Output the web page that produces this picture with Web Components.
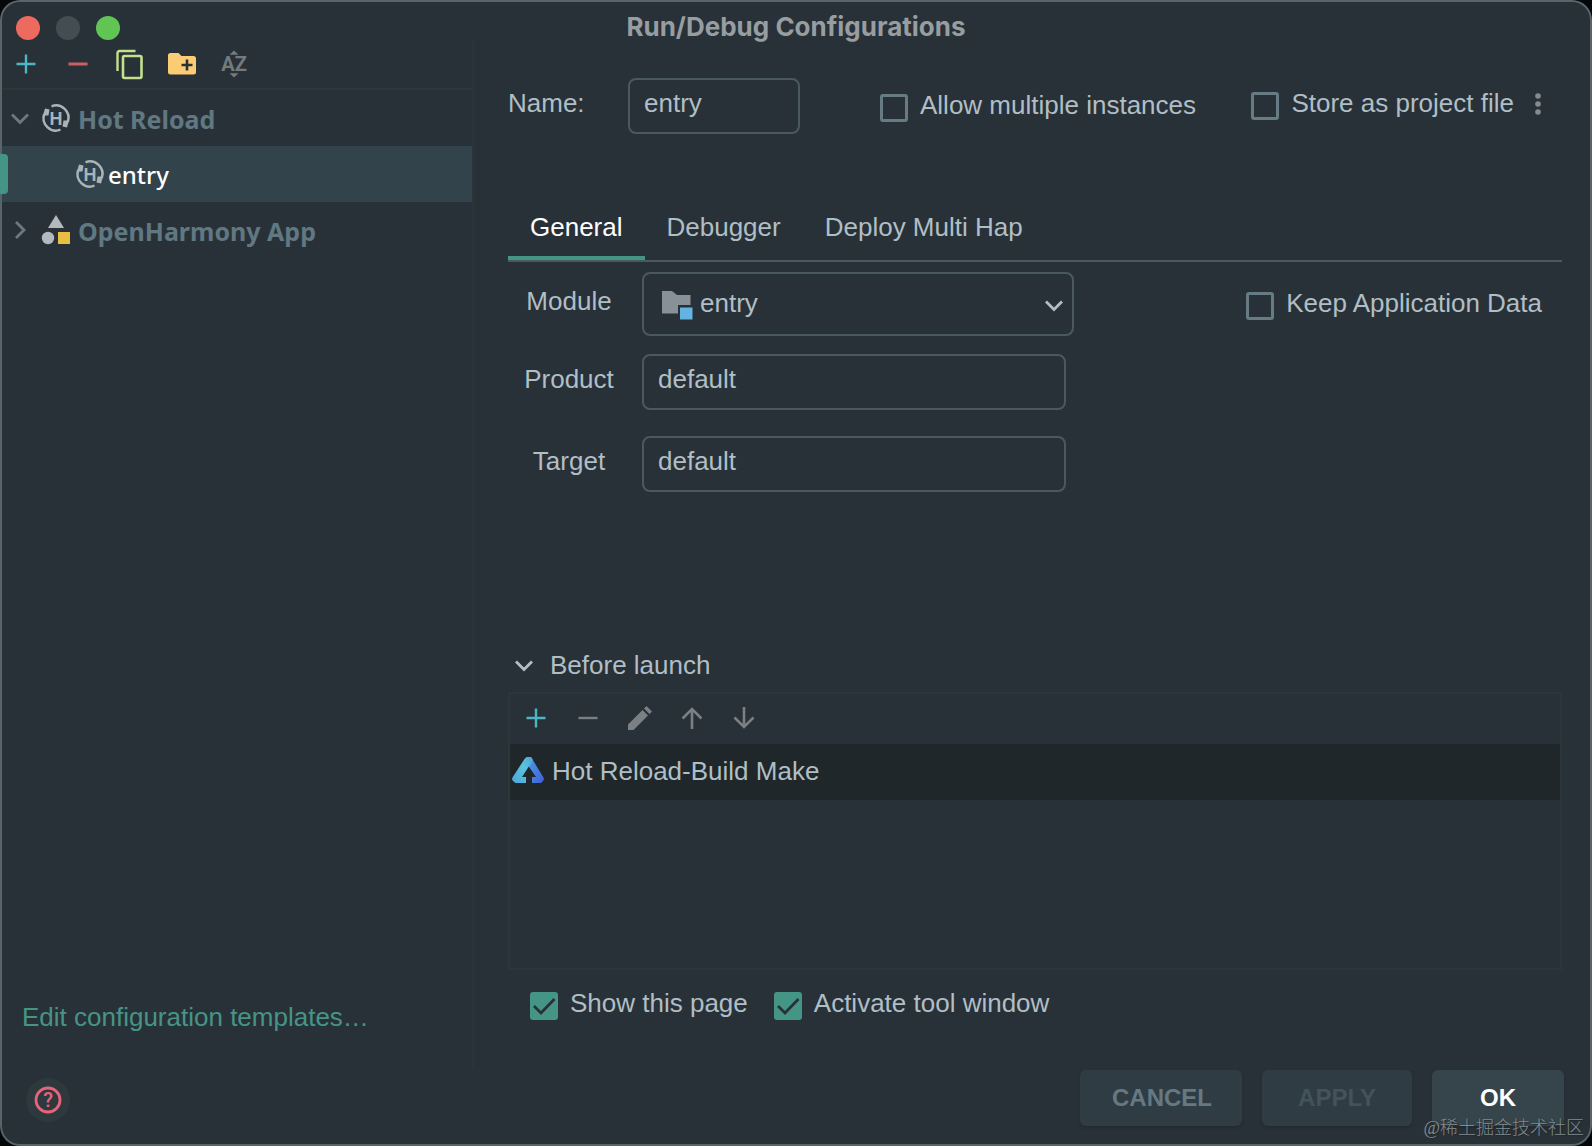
<!DOCTYPE html>
<html lang="en">
<head>
<meta charset="utf-8">
<title>Run/Debug Configurations</title>
<style>
  html { background: #05080a; }
  body { margin: 0; font: 26px/30px "Liberation Sans", "Noto Sans CJK SC", sans-serif; color: #b0bec5; }
</style>
</head>
<body>
<run-dialog></run-dialog>
<script>
function define(name, html, setup) {
  const template = document.createElement('template');
  template.innerHTML = '<style>*{box-sizing:border-box}:host{display:block;box-sizing:border-box}button,input,select{font:inherit;color:inherit;margin:0}button{background:none;border:0;padding:0}</style>' + html;
  customElements.define(name, class extends HTMLElement {
    connectedCallback() {
      if (this.shadowRoot) return;
      this.attachShadow({ mode: 'open' }).append(template.content.cloneNode(true));
      if (setup) setup(this, this.shadowRoot);
    }
  });
}

const icons = {
  plus: '<path d="M14 4.500v19M4.500 14h19" stroke="#4db6c4" stroke-width="2.400"/>',
  minus: '<path d="M4.500 14h19" stroke="#c95f63" stroke-width="3"/>',
  minusOff: '<path d="M4.500 14h19" stroke="#7b8183" stroke-width="2.400"/>',
  copy: '<path d="M1.500 21V3a2 2 0 0 1 2-2H19.500" stroke="#c3e08d" stroke-width="2.400"/><rect x="7" y="6" width="18.500" height="22" rx="1.500" stroke="#c3e08d" stroke-width="2.600"/>',
  folder: '<path d="M2.500 3h8l3 3h12a2.500 2.500 0 0 1 2.500 2.500v13.500a2.500 2.500 0 0 1-2.500 2.500h-23A2.500 2.500 0 0 1 0 22V5.500A2.500 2.500 0 0 1 2.500 3z" fill="#fccc75"/><path d="M19 9.500v11M13.500 15h11" stroke="#293138" stroke-width="2.600"/>',
  sort: '<path d="M14 .5l4.500 4.300h-9zM14 27.500l4.500-4.300h-9z" fill="#737b7f"/><text x="14" y="21" text-anchor="middle" font-family="Roboto, sans-serif" font-weight="700" font-size="20" fill="#737b7f">AZ</text>',
  down: '<path d="M6 10.500l8 8 8-8" stroke="currentColor" stroke-width="2.800"/>',
  right: '<path d="M10 6l8 8-8 8" stroke="currentColor" stroke-width="2.800"/>',
  reload: '<path d="M9.500 2.300A12.500 12.500 0 0 1 25.800 18M18.500 25.700A12.500 12.500 0 0 1 2.200 10" stroke="#a9b3b8" stroke-width="2.500"/><path d="M1 11.500L3 4.500l4.500 1-1 6zM27 16.500l-2 7-4.500-1 1-6z" fill="#a9b3b8"/><text x="14" y="20.500" text-anchor="middle" font-family="Liberation Sans, sans-serif" font-weight="700" font-size="18" fill="#a9b3b8">H</text>',
  app: '<path d="M14-1l8 13H6z" fill="#b3b9bc"/><circle cx="6" cy="22" r="6.200" fill="#b3b9bc"/><path d="M16 16h12v12H16z" fill="#e8bf42"/>',
  pencil: '<path d="M2 26v-5.500L16.500 6l5.500 5.500L7.500 26zM18 4.500L20.500 2l5.500 5.500L23.500 10z" fill="#7b8183"/>',
  up: '<path d="M14 25V5M4.500 14.500L14 5l9.500 9.500" stroke="#7b8183" stroke-width="2.600"/>',
  downArrow: '<path d="M14 3v20M4.500 13.500L14 23l9.500-9.500" stroke="#7b8183" stroke-width="2.600"/>',
  dots: '<g fill="#858c8f"><circle cx="14" cy="4" r="2.800"/><circle cx="14" cy="12" r="2.800"/><circle cx="14" cy="20" r="2.800"/></g>',
  module: '<path d="M0 1h10l5 4h13.500v10H16v8.500H0z" fill="#879197"/><path d="M18 17.500h12.500v12H18z" fill="#65b3e0"/>',
  help: '<circle cx="14" cy="14" r="12" stroke="#e8647c" stroke-width="2.800"/><text x="14" y="21" text-anchor="middle" font-family="Roboto, sans-serif" font-weight="500" font-size="20" fill="#e8647c">?</text>',
  make: '<defs><linearGradient id="a" x1="0" y1="1" x2="1" y2="0"><stop stop-color="#49a6de"/><stop offset=".6" stop-color="#5bc4dc"/><stop offset="1" stop-color="#4aa4dd"/></linearGradient><linearGradient id="b" x1="0" y1="0" x2="1" y2="1"><stop stop-color="#4f9fe6"/><stop offset="1" stop-color="#3f5fd8"/></linearGradient></defs><path d="M17 0l12.500 20.500q1 2-.5 3.500l-2 2H18v-6h4L13 7z" fill="url(#b)"/><path d="M12.500 0H17l2 3L8 20h4v6H1.500l-2.500-2q-1.500-1.500-.5-3.500L10.500 2z" fill="url(#a)"/>'
};

define('ui-icon', '<style>:host{display:block;width:28px;height:28px;flex:none}svg{display:block;width:28px;height:28px;overflow:visible}</style><svg viewBox="0 0 28 28" fill="none" aria-hidden="true"></svg>',
  (host, root) => { root.querySelector('svg').innerHTML = icons[host.getAttribute('name')]; });

define('ui-tool', '<style>:host{width:52px;flex:none}button{display:grid;place-items:center;width:100%;height:48px}</style><button type="button"><slot></slot></button>',
  (host, root) => root.querySelector('button').setAttribute('aria-label', host.getAttribute('label')));

define('ui-check', `<style>
  label{display:flex;align-items:center;gap:12px;white-space:nowrap}
  .box{display:grid;width:28px;height:28px;flex:none}
  input,svg{grid-area:1/1;width:28px;height:28px}
  input{appearance:none;border:3px solid #667b83;border-radius:3px}
  input:checked{background:#459587;border-color:#459587}
  svg{visibility:hidden;pointer-events:none}input:checked+svg{visibility:visible}
  .text{padding-bottom:6px}</style>
  <label><span class="box"><input type="checkbox"><svg viewBox="0 0 28 28" fill="none"><path d="M4 14l7 7L24.500 7" stroke="#293138" stroke-width="2.800"/></svg></span><span class="text"><slot></slot></span></label>`,
  (host, root) => { root.querySelector('input').checked = host.hasAttribute('checked'); });

define('ui-field', `<style>
  :host{display:flex;align-items:center}
  label{width:var(--label,122px);margin-right:12px;padding-bottom:6px;text-align:var(--align,center);flex:none}
  input{width:var(--field,424px);height:56px;min-width:0;background:none;border:2px solid #4a595f;border-radius:8px;padding:0 14px 6px;outline:0}</style>
  <label for="f"></label><input id="f" type="text">`,
  (host, root) => {
    root.querySelector('label').textContent = host.getAttribute('label');
    root.querySelector('input').value = host.getAttribute('value');
  });

define('ui-combo', `<style>
  :host{display:flex;align-items:center}
  label{width:122px;margin-right:12px;padding-bottom:6px;text-align:center;flex:none}
  .box{display:grid;grid-template-columns:56px 1fr 34px;align-items:center;width:432px;height:64px}
  select{grid-area:1/1/2/4;width:100%;height:64px;appearance:none;background:none;border:2px solid #4a595f;border-radius:8px;padding:0 40px 2px 56px;outline:0}
  ui-icon{grid-row:1;pointer-events:none}.m{grid-column:1;margin-left:20px}.c{grid-column:3;margin-top:2px}</style>
  <label for="s">Module</label><div class="box"><select id="s"><option>entry</option></select><ui-icon class="m" name="module"></ui-icon><ui-icon class="c" name="down"></ui-icon></div>`);

define('ui-tab', `<style>
  button{height:68px;padding:6px 22px 0;border-bottom:4px solid transparent;white-space:nowrap}
  :host([selected]) button{color:#fff;border-color:#459587}</style>
  <button type="button" role="tab"><slot></slot></button>`,
  (host, root) => root.querySelector('button').setAttribute('aria-selected', host.hasAttribute('selected')));

define('ui-button', `<style>
  button{width:100%;height:56px;padding:0 32px;border-radius:6px;background:#303c43;color:#657983;font-weight:700;font-size:24px;box-shadow:0 2px 3px #232b30}
  :host([primary]) button{background:#35454b;color:#fff}
  button:disabled{color:#43525b}</style>
  <button type="button"><slot></slot></button>`,
  (host, root) => { root.querySelector('button').disabled = host.hasAttribute('disabled'); });

define('tree-row', `<style>
  :host{position:relative}
  button{display:flex;align-items:center;width:100%;height:56px;padding-left:6px;text-align:left;font:700 25px/30px "Noto Sans",sans-serif;color:#607882;white-space:nowrap}
  .tw{width:28px;height:28px;margin-right:8px;color:#6c7a80}
  .text{margin-left:8px;padding-top:2px}
  :host([selected]) button{background:#32434b;color:#fff;font-size:24px;font-weight:500;padding-left:40px}
  :host([selected]) .text{margin-left:4px}
  .bar{display:none}
  :host([selected]) .bar{display:block;position:absolute;z-index:2;left:0;top:8px;width:8px;height:40px;border-radius:0 4px 4px 0;background:#459587}</style>
  <button type="button"><span class="tw"><slot name="twisty"></slot></span><slot name="icon"></slot><span class="text"><slot></slot></span></button><span class="bar"></span>`);

define('title-bar', `<style>
  :host{display:grid;grid-template-columns:1fr auto 1fr;align-items:center;height:40px;padding:16px 16px 0}
  .lights{display:flex;gap:16px}button{width:24px;height:24px;border-radius:50%}
  h1{margin:0;padding-bottom:2px;font:700 26px/22px Inter,sans-serif;color:#979da0}</style>
  <div class="lights"><button type="button" aria-label="Close" style="background:#ed6a5e"></button><button type="button" aria-label="Minimize" style="background:#444d52"></button><button type="button" aria-label="Zoom" style="background:#61c554"></button></div>
  <h1><slot></slot></h1>`);

define('config-tree', `<style>
  :host{display:flex;flex-direction:column;width:474px;flex:none;border-right:2px solid #2a353a}
  .tools{display:flex;height:50px;border-bottom:2px solid #2c363b}
  nav{flex:1}
  a{align-self:flex-start;margin:0 22px 38px;color:#459587;text-decoration:none}</style>
  <div class="tools" role="toolbar"><ui-tool label="Add"><ui-icon name="plus"></ui-icon></ui-tool><ui-tool label="Remove"><ui-icon name="minus"></ui-icon></ui-tool><ui-tool label="Copy"><ui-icon name="copy"></ui-icon></ui-tool><ui-tool label="New folder"><ui-icon name="folder"></ui-icon></ui-tool><ui-tool label="Sort"><ui-icon name="sort"></ui-icon></ui-tool></div>
  <nav>
    <tree-row><ui-icon slot="twisty" name="down"></ui-icon><ui-icon slot="icon" name="reload"></ui-icon>Hot Reload</tree-row>
    <tree-row selected><ui-icon slot="icon" name="reload"></ui-icon>entry</tree-row>
    <tree-row><ui-icon slot="twisty" name="right"></ui-icon><ui-icon slot="icon" name="app"></ui-icon>OpenHarmony App</tree-row>
  </nav>
  <a href="#templates">Edit configuration templates…</a>`);

define('before-launch', `<style>
  :host{display:flex;flex-direction:column;flex:1}
  .head{display:flex;align-items:center;gap:12px;height:52px;padding:0 0 2px 2px}
  .panel{flex:1;border:2px solid #2b363b}
  .tools{display:flex;height:50px}
  .item{display:flex;align-items:center;gap:10px;height:56px;padding:0 4px 2px;background:#1f272a}</style>
  <button type="button" class="head"><ui-icon name="down"></ui-icon><span>Before launch</span></button>
  <div class="panel">
    <div class="tools" role="toolbar"><ui-tool label="Add task"><ui-icon name="plus"></ui-icon></ui-tool><ui-tool label="Remove task"><ui-icon name="minusOff"></ui-icon></ui-tool><ui-tool label="Edit task"><ui-icon name="pencil"></ui-icon></ui-tool><ui-tool label="Move up"><ui-icon name="up"></ui-icon></ui-tool><ui-tool label="Move down"><ui-icon name="downArrow"></ui-icon></ui-tool></div>
    <div class="item"><ui-icon name="make"></ui-icon><span>Hot Reload-Build Make</span></div>
  </div>`);

define('config-form', `<style>
  :host{display:flex;flex-direction:column;flex:1;min-width:0;padding:38px 30px 50px 34px}
  .top{display:flex;align-items:center}
  .top ui-field{--label:108px;--align:left;--field:172px}
  .top ui-tool{width:48px}
  .allow{margin:4px auto 0 80px}
  .tabs{display:flex;margin-top:58px;border-bottom:2px solid #4a595f}
  .form{display:grid;grid-template-columns:auto 1fr;justify-items:start;align-items:center;margin:10px 0 148px;row-gap:26px}
  .form ui-combo{margin-bottom:-8px}
  .keep{justify-self:end;margin:12px 20px 0 0}
  .form ui-field{grid-column:1/3}
  .foot{display:flex;gap:26px;margin-top:22px;padding-left:22px;height:28px;align-items:center}</style>
  <div class="top"><ui-field label="Name:" value="entry"></ui-field><ui-check class="allow">Allow multiple instances</ui-check><ui-check>Store as project file</ui-check><ui-tool label="More options"><ui-icon name="dots"></ui-icon></ui-tool></div>
  <div class="tabs" role="tablist"><ui-tab selected>General</ui-tab><ui-tab>Debugger</ui-tab><ui-tab>Deploy Multi Hap</ui-tab></div>
  <div class="form"><ui-combo></ui-combo><ui-check class="keep">Keep Application Data</ui-check><ui-field label="Product" value="default"></ui-field><ui-field label="Target" value="default"></ui-field></div>
  <before-launch></before-launch>
  <div class="foot"><ui-check checked>Show this page</ui-check><ui-check checked>Activate tool window</ui-check></div>`);

define('run-dialog', `<style>
  :host{display:flex;flex-direction:column;min-height:100vh;position:relative;background:#293138;border-radius:20px;overflow:hidden}
  :host::after{content:"";position:absolute;z-index:1;inset:0;border:2px solid #586468;border-radius:20px;pointer-events:none}
  main{display:flex;flex:1}
  footer{display:flex;align-items:center;gap:20px;padding:0 28px 20px 26px}
  .help{display:grid;place-items:center;width:44px;height:44px;border-radius:50%;background:#2d393d;margin:4px auto 0 0}
  .cancel{width:162px}.apply{width:150px}.ok{width:132px}
  .mark{position:absolute;right:8px;bottom:6px;font:18px/24px "Liberation Serif","Noto Sans CJK SC",serif;font-weight:300;color:#818b8f;text-shadow:1px 1px 1px #20282c;pointer-events:none}</style>
  <title-bar>Run/Debug Configurations</title-bar>
  <main><config-tree></config-tree><config-form></config-form></main>
  <footer><button class="help" type="button" aria-label="Help"><ui-icon name="help"></ui-icon></button><ui-button class="cancel">CANCEL</ui-button><ui-button class="apply" disabled>APPLY</ui-button><ui-button class="ok" primary>OK</ui-button></footer>
  <div class="mark">@稀土掘金技术社区</div>`);
</script>
</body>
</html>
